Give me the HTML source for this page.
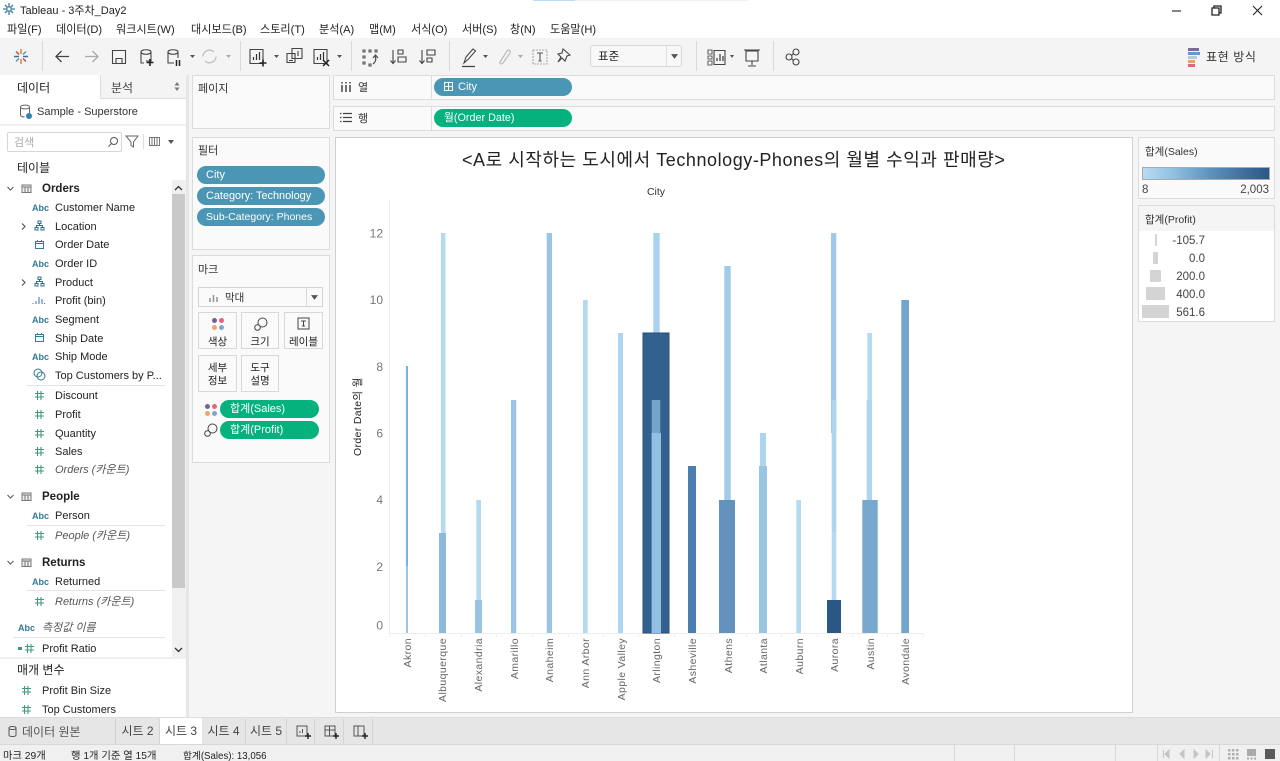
<!DOCTYPE html>
<html lang="ko"><head><meta charset="utf-8"><title>Tableau - 3주차_Day2</title>
<style>
html,body{margin:0;padding:0;width:1280px;height:761px;overflow:hidden;background:#f5f5f5}
body{position:relative;font-family:"Liberation Sans","Noto Sans CJK KR",sans-serif;color:#222;font-size:12px}
.a{position:absolute}
.t{position:absolute;white-space:nowrap;line-height:14px;height:14px;margin-top:1px}
.c{position:absolute;background:#fafafa;border:1px solid #dcdcdc;box-sizing:border-box}
.p{position:absolute;border-radius:10px;color:#fff;line-height:19px;height:18px;white-space:nowrap;box-sizing:border-box}
.b{background:#4b96b4}.g{background:#05b27e}
.i{position:absolute;overflow:visible}
.l{position:absolute;height:1px;background:#e4e4e4}
.m{position:absolute;width:39px;height:37px;background:#fafafa;border:1px solid #d8d8d8;box-sizing:border-box;text-align:center;font-size:10.5px;line-height:13px;color:#222}
.s{position:absolute;width:1px;height:30px;top:41px;background:#d8d8d8}
.tab{position:absolute;top:719px;height:25px;border-right:1px solid #d4d4d4;box-sizing:border-box;text-align:center;line-height:25px;font-size:12px;color:#444}
.st{position:absolute;top:744px;height:17px;width:1px;background:#d8d8d8}
</style></head>
<body>
<svg width="0" height="0" style="position:absolute">
<symbol id="hash" viewBox="0 0 11 11"><path d="M3.500 1v9M7 1v9M1 3.500h9M1 7h9" stroke="#3f9a7a" stroke-width="1.100" fill="none"/></symbol>
<symbol id="date" viewBox="0 0 11 11"><path d="M1.500 2.500h8v7h-8zM1.500 4.500h8M3.500 1v2M7.500 1v2" stroke="#2f7f9c" stroke-width="1" fill="none"/></symbol>
<symbol id="hier" viewBox="0 0 11 11"><path d="M4 1h3v2.500H4zM1 7.500h3V10H1zM7 7.500h3V10H7zM5.500 3.500V5.500M2.500 7.500V5.500h6v2" stroke="#2f6f8f" stroke-width="1" fill="none"/></symbol>
<symbol id="tbl" viewBox="0 0 11 11"><path d="M1 2h9v7.500H1zM1 4h9M4 4v5.500M7 4v5.500" stroke="#777" stroke-width="1" fill="#eee"/></symbol>
<symbol id="chev" viewBox="0 0 9 9"><path d="M1.500 3l3 3 3-3" stroke="#555" stroke-width="1" fill="none"/></symbol>
<symbol id="chr" viewBox="0 0 9 9"><path d="M3 1.500l3 3-3 3" stroke="#444" stroke-width="1" fill="none"/></symbol>
<symbol id="dots" viewBox="0 0 14 14"><circle cx="3.500" cy="3.500" r="2.500" fill="#76618f"/><circle cx="10.500" cy="3.500" r="2.500" fill="#e8637a"/><circle cx="3.500" cy="10.500" r="2.500" fill="#f0a46c"/><circle cx="10.500" cy="10.500" r="2.500" fill="#7fa6cf"/></symbol>
<symbol id="size" viewBox="0 0 14 14"><circle cx="8.500" cy="5.500" r="4.500" stroke="#444" fill="none"/><circle cx="3.500" cy="10.500" r="2.800" stroke="#444" fill="#fafafa"/></symbol>
<symbol id="dd" viewBox="0 0 6 4"><path d="M0 0h6L3 4z" fill="#555"/></symbol>
</svg>

<!-- title bar -->
<div class="a" style="left:0;top:0;width:1280px;height:38px;background:#fff"></div>
<div class="a" style="left:533px;top:0;width:42px;height:1px;background:#bcdcf3"></div>
<div class="a" style="left:575px;top:0;width:173px;height:1px;background:#f2f2f2"></div>
<svg class="i" style="left:2px;top:2px" width="14" height="14" viewBox="0 0 14 14"><path d="M7 1v12M1 7h12M3 3l8 8M11 3l-8 8" stroke="#3a7fa8" stroke-width="1.300"/><path d="M5 5h4v4H5z" fill="#fff" stroke="#3a6f98"/></svg>
<div class="t" style="left:20px;top:3px;font-size:11px">Tableau - 3주차_Day2</div>
<div class="t" style="left:7px;top:22px;font-size:11.100px">파일(F)</div>
<div class="t" style="left:56px;top:22px;font-size:11.100px">데이터(D)</div>
<div class="t" style="left:116px;top:22px;font-size:11.100px">워크시트(W)</div>
<div class="t" style="left:191px;top:22px;font-size:11.100px">대시보드(B)</div>
<div class="t" style="left:260px;top:22px;font-size:11.100px">스토리(T)</div>
<div class="t" style="left:319px;top:22px;font-size:11.100px">분석(A)</div>
<div class="t" style="left:369px;top:22px;font-size:11.100px">맵(M)</div>
<div class="t" style="left:411px;top:22px;font-size:11.100px">서식(O)</div>
<div class="t" style="left:462px;top:22px;font-size:11.100px">서버(S)</div>
<div class="t" style="left:510px;top:22px;font-size:11.100px">창(N)</div>
<div class="t" style="left:550px;top:22px;font-size:11.100px">도움말(H)</div>
<svg class="i" style="left:1170px;top:4px" width="100" height="14" viewBox="0 0 100 14"><path d="M2 7h9" stroke="#333" stroke-width="1.200"/><path d="M42 4h7v7h-7zM44 4V2h7v7h-2" stroke="#222" stroke-width="1.300" fill="none"/><path d="M83 2l9 9M92 2l-9 9" stroke="#222" stroke-width="1.100"/></svg>

<!-- toolbar -->
<div class="a" style="left:0;top:38px;width:1280px;height:37px;background:#f4f4f4"></div>
<div class="s" style="left:42px"></div><div class="s" style="left:240px"></div><div class="s" style="left:351px"></div><div class="s" style="left:449px"></div><div class="s" style="left:696px"></div><div class="s" style="left:773px"></div>
<svg class="i" style="left:0;top:38px" width="830" height="37" viewBox="0 0 830 37" fill="none" stroke="#444" stroke-width="1.100">
<g stroke-width="1.400"><path d="M21 11v5M21 21v5" stroke="#e8763a"/><path d="M14 18.500h5M23 18.500h5" stroke="#3a6f98"/><path d="M16 13.500l3 3M23 20.500l3 3" stroke="#c8403f"/><path d="M26 13.500l-3 3M19 20.500l-3 3" stroke="#5a8fb8"/></g>
<path d="M56 18.500h13M61.500 13l-5.500 5.500 5.500 5.500" stroke-width="1.300" stroke="#444"/>
<path d="M85 18.500h13M92.500 13l5.500 5.500-5.500 5.500" stroke="#aaa" stroke-width="1.300"/>
<path d="M112.500 12.500h13v13h-13zM116 25.500v-5h6v5"/>
<path d="M141 14c0-3 10-3 10 0v9h-5M141 14v11h3M141 14c0 3 10 3 10 0"/><path d="M150 21v7M146.500 24.500h7" stroke="#222" stroke-width="1.600"/>
<path d="M168 14c0-3 10-3 10 0v6M168 14v11h6M168 14c0 3 10 3 10 0"/><path d="M176.500 22v6M179.500 22v6" stroke="#222" stroke-width="1.500"/>
<path d="M190 17h5l-2.500 3z" fill="#555" stroke="none"/>
<path d="M203 18.500a6.500 6.500 0 0 1 11-4.500M216 18.500a6.500 6.500 0 0 1-11 4.500" stroke="#bbb" stroke-width="1.200"/>
<path d="M226 17h5l-2.500 3z" fill="#aaa" stroke="none"/>
<path d="M250 11.500h13v14h-13z"/><path d="M253.500 22v-3M256.500 22v-6M259.500 22v-8" stroke="#333" stroke-width="1.200"/><path d="M263 21.500v7M259.500 25h7" stroke="#222" stroke-width="1.600"/>
<path d="M274 17h5l-2.500 3z" fill="#555" stroke="none"/>
<path d="M292 10.500h10v10h-10zM287 15.500h8v9h-8z" fill="#f4f4f4"/><path d="M295 18v-3M298 18v-5" stroke="#444"/><path d="M289 22.500h4"/>
<path d="M314 11.500h13v14h-13z"/><path d="M317.500 22v-3M320.500 22v-6M323.500 22v-8" stroke="#333" stroke-width="1.200"/><path d="M323 22l6 6M329 22l-6 6" stroke="#222" stroke-width="1.500"/>
<path d="M337 17h5l-2.500 3z" fill="#555" stroke="none"/>
<path d="M363 12h2v2h-2zM363 18h2v2h-2zM369 12h2v2h-2zM375 12h2v2h-2zM369 26h2v2h-2zM363 24h2v2h-2z" stroke="#555"/><path d="M375 18a6 6 0 0 1-2 8M378 20l-2.500-3-2.500 3"/>
<path d="M393 12v13M390.500 22.500l2.500 3 2.500-3" /><path d="M398 12h5v4h-5zM398 19h8v5h-8z"/>
<path d="M422 12v13M419.500 22.500l2.500 3 2.500-3"/><path d="M427 12h8v5h-8zM427 20h5v4h-5z"/>
<path d="M464 25l2-6 7-8 2.500 2-7 8z"/><path d="M462 28.500h13" stroke-width="1.300"/>
<path d="M483 17h5l-2.500 3z" fill="#555" stroke="none"/>
<path d="M500 24l7-11c2-2 4 0 3 2l-7 10c-2 2-4 0-3-1z" stroke="#bbb" stroke-width="1.200"/>
<path d="M518 17h5l-2.500 3z" fill="#aaa" stroke="none"/>
<path d="M533 12h14v14h-14z" stroke="#aaa" stroke-dasharray="2 1"/><path d="M537 15h6M540 15v8M538.500 23h3" stroke="#555"/>
<path d="M563 11l7 6-3 1-2 5-3-3-4 4 3-5-3-3 4-1z" stroke="#444"/>
<path d="M708 12h4v4h-4zM708 18h4v3h-4zM708 23h4v4h-4z" stroke="#666"/><path d="M714 12.500h11v14h-11z"/><path d="M717 23v-3M720 23v-7M723 23v-5" stroke="#444" stroke-width="1.300"/>
<path d="M730 17h4l-2 3z" fill="#555" stroke="none"/>
<path d="M744 12h16M746 13h12v10h-12zM752 23v4M748 28h8" stroke-width="1.100"/>
<circle cx="796" cy="14" r="3"/><circle cx="789" cy="19" r="3"/><circle cx="796" cy="24" r="3"/><path d="M793.500 15.500l-2 2M791.500 20.500l2 2"/>
</svg>
<div class="a" style="left:590px;top:45px;width:92px;height:22px;background:#f8f8f8;border:1px solid #d8d8d8;border-radius:3px;box-sizing:border-box"></div>
<div class="a" style="left:666px;top:46px;width:1px;height:20px;background:#ddd"></div>
<svg class="i" style="left:671px;top:54px" width="7" height="5"><use href="#dd"/></svg>
<div class="t" style="left:598px;top:49px;font-size:11.500px">표준</div>
<div class="a" style="left:1188px;top:48px;width:11px;height:3px;background:#7c6a96"></div>
<div class="a" style="left:1188px;top:52px;width:12px;height:3px;background:#5b9bd0"></div>
<div class="a" style="left:1188px;top:56px;width:9px;height:3px;background:#b6c9dc"></div>
<div class="a" style="left:1188px;top:60px;width:7px;height:3px;background:#f0a060"></div>
<div class="a" style="left:1188px;top:64px;width:7px;height:3px;background:#e8637a"></div>
<div class="t" style="left:1206px;top:49px;font-size:12px;letter-spacing:.6px;color:#333">표현 방식</div>

<!-- data pane -->
<div class="a" style="left:0;top:75px;width:186px;height:643px;background:#fff"></div>
<div class="a" style="left:186px;top:75px;width:3px;height:643px;background:#e6e6e6"></div>
<div class="a" style="left:100px;top:75px;width:86px;height:24px;background:#f4f4f4;border-left:1px solid #ddd;border-bottom:1px solid #ddd;box-sizing:border-box"></div>
<div class="t" style="left:17px;top:80px;font-size:12px">데이터</div>
<div class="t" style="left:111px;top:80px;font-size:12px;color:#444">분석</div>
<svg class="i" style="left:174px;top:82px" width="6" height="9"><path d="M3 0l2.500 3.500h-5zM3 9L.5 5.500h5z" fill="#777"/></svg>
<svg class="i" style="left:19px;top:104px" width="14" height="15" viewBox="0 0 14 15" fill="none" stroke="#666"><path d="M1.500 3c0-2.500 9-2.500 9 0v6M1.500 3v8c0 1 2 2 4 2M1.500 3c0 2.500 9 2.500 9 0"/><circle cx="10" cy="12" r="3" fill="#2d7fb5" stroke="none"/></svg>
<div class="t" style="left:37px;top:104px;font-size:11px;color:#333">Sample - Superstore</div>
<div class="a" style="left:0;top:124px;width:186px;height:2px;background:#efefef"></div>
<div class="a" style="left:7px;top:132px;width:115px;height:20px;background:#fff;border:1px solid #d6d6d6;border-radius:2px;box-sizing:border-box"></div>
<div class="t" style="left:14px;top:135px;font-size:11px;color:#aaa">검색</div>
<svg class="i" style="left:107px;top:136px" width="12" height="12" fill="none" stroke="#555"><circle cx="7" cy="5" r="3.500"/><path d="M4.500 7.500L1.500 10.500"/></svg>
<svg class="i" style="left:125px;top:134px" width="15" height="15" fill="none" stroke="#666"><path d="M1 2h12L8.500 8v5L6 11.500V8z"/></svg>
<div class="a" style="left:143px;top:134px;width:1px;height:15px;background:#ddd"></div>
<svg class="i" style="left:149px;top:137px" width="12" height="10"><path d="M.5 0v9M3 0v9M5.500 0v9M8 0v9M10.500 0v9M0 .5h11M0 8.500h11" stroke="#777" stroke-width="1"/></svg>
<svg class="i" style="left:168px;top:140px" width="6" height="4"><use href="#dd"/></svg>
<div class="t" style="left:17px;top:160px;font-size:12px">테이블</div>

<div class="a" style="left:172px;top:180px;width:14px;height:477px;background:#f0f0f0"></div>
<div class="a" style="left:172px;top:194px;width:13px;height:394px;background:#c9c9c9"></div>
<svg class="i" style="left:174px;top:184px" width="9" height="9"><path d="M1 6l3.500-3.500L8 6" stroke="#333" stroke-width="1.300" fill="none"/></svg>
<svg class="i" style="left:174px;top:645px" width="9" height="9"><path d="M1 3l3.500 3.500L8 3" stroke="#333" stroke-width="1.300" fill="none"/></svg>

<!-- table heads -->
<svg class="i" style="left:6px;top:184px" width="9" height="9"><use href="#chev"/></svg><svg class="i" style="left:21px;top:183px" width="11" height="11"><use href="#tbl"/></svg><div class="t" style="left:42px;top:181px;font-weight:bold;font-size:11.500px;color:#222">Orders</div>
<svg class="i" style="left:6px;top:492px" width="9" height="9"><use href="#chev"/></svg><svg class="i" style="left:21px;top:491px" width="11" height="11"><use href="#tbl"/></svg><div class="t" style="left:42px;top:489px;font-weight:bold;font-size:11.500px;color:#222">People</div>
<svg class="i" style="left:6px;top:558px" width="9" height="9"><use href="#chev"/></svg><svg class="i" style="left:21px;top:557px" width="11" height="11"><use href="#tbl"/></svg><div class="t" style="left:42px;top:555px;font-weight:bold;font-size:11.500px;color:#222">Returns</div>

<!-- fields -->
<style>.f{position:absolute;left:55px;white-space:nowrap;line-height:14px;height:14px;font-size:11px;color:#222;margin-top:1px}.ab{position:absolute;left:32px;font-size:9px;font-weight:bold;color:#2f7a9a;line-height:14px;margin-top:1px}.it{font-style:italic;color:#555}</style>
<div class="ab" style="top:200px">Abc</div><div class="f" style="top:200px">Customer Name</div>
<svg class="i" style="left:19px;top:222px" width="9" height="9"><use href="#chr"/></svg><svg class="i" style="left:34px;top:220px" width="11" height="11"><use href="#hier"/></svg><div class="f" style="top:219px">Location</div>
<svg class="i" style="left:34px;top:239px" width="11" height="11"><use href="#date"/></svg><div class="f" style="top:237px">Order Date</div>
<div class="ab" style="top:256px">Abc</div><div class="f" style="top:256px">Order ID</div>
<svg class="i" style="left:19px;top:278px" width="9" height="9"><use href="#chr"/></svg><svg class="i" style="left:34px;top:276px" width="11" height="11"><use href="#hier"/></svg><div class="f" style="top:275px">Product</div>
<svg class="i" style="left:32px;top:295px" width="13" height="10"><path d="M1 8v1M4 6v3M7 2v7M10 4v5M12.500 8v1" stroke="#2f7a9a" stroke-width="1"/></svg><div class="f" style="top:293px">Profit (bin)</div>
<div class="ab" style="top:312px">Abc</div><div class="f" style="top:312px">Segment</div>
<svg class="i" style="left:34px;top:332px" width="11" height="11"><use href="#date"/></svg><div class="f" style="top:331px">Ship Date</div>
<div class="ab" style="top:349px">Abc</div><div class="f" style="top:349px">Ship Mode</div>
<svg class="i" style="left:33px;top:368px" width="13" height="13" fill="none" stroke="#2f7a9a"><circle cx="5" cy="5" r="4"/><circle cx="8" cy="8" r="4"/></svg><div class="f" style="top:368px">Top Customers by P...</div>
<div class="l" style="left:27px;top:385px;width:138px"></div>
<svg class="i" style="left:34px;top:390px" width="11" height="11"><use href="#hash"/></svg><div class="f" style="top:388px">Discount</div>
<svg class="i" style="left:34px;top:409px" width="11" height="11"><use href="#hash"/></svg><div class="f" style="top:407px">Profit</div>
<svg class="i" style="left:34px;top:428px" width="11" height="11"><use href="#hash"/></svg><div class="f" style="top:426px">Quantity</div>
<svg class="i" style="left:34px;top:446px" width="11" height="11"><use href="#hash"/></svg><div class="f" style="top:444px">Sales</div>
<svg class="i" style="left:34px;top:464px" width="11" height="11"><use href="#hash"/></svg><div class="f it" style="top:462px">Orders (카운트)</div>
<div class="ab" style="top:508px">Abc</div><div class="f" style="top:508px">Person</div>
<div class="l" style="left:27px;top:525px;width:138px"></div>
<svg class="i" style="left:34px;top:530px" width="11" height="11"><use href="#hash"/></svg><div class="f it" style="top:528px">People (카운트)</div>
<div class="ab" style="top:574px">Abc</div><div class="f" style="top:574px">Returned</div>
<div class="l" style="left:27px;top:590px;width:138px"></div>
<svg class="i" style="left:34px;top:596px" width="11" height="11"><use href="#hash"/></svg><div class="f it" style="top:594px">Returns (카운트)</div>
<div class="ab" style="top:620px;left:18px">Abc</div><div class="f it" style="top:620px;left:42px">측정값 이름</div>
<div class="l" style="left:13px;top:637px;width:152px"></div>
<svg class="i" style="left:24px;top:643px" width="11" height="11"><use href="#hash"/></svg><div class="a" style="left:18px;top:647px;width:4px;height:3px;background:#3f9a7a"></div><div class="f" style="top:641px;left:42px">Profit Ratio</div>
<div class="a" style="left:0;top:657px;width:186px;height:2px;background:#efefef"></div>
<div class="t" style="left:17px;top:662px;font-size:12px">매개 변수</div>
<svg class="i" style="left:21px;top:685px" width="11" height="11"><use href="#hash"/></svg><div class="f" style="top:683px;left:42px">Profit Bin Size</div>
<svg class="i" style="left:21px;top:704px" width="11" height="11"><use href="#hash"/></svg><div class="f" style="top:702px;left:42px">Top Customers</div>

<!-- pages / filters / marks -->
<div class="c" style="left:192px;top:75px;width:138px;height:54px"></div>
<div class="t" style="left:198px;top:81px;font-size:11px;color:#333">페이지</div>
<div class="c" style="left:192px;top:137px;width:138px;height:113px"></div>
<div class="t" style="left:198px;top:143px;font-size:11px;color:#333">필터</div>
<div class="p b" style="left:197px;top:166px;width:128px;padding-left:9px;font-size:11px">City</div>
<div class="p b" style="left:197px;top:187px;width:128px;padding-left:9px;font-size:10.900px">Category: Technology</div>
<div class="p b" style="left:197px;top:208px;width:128px;padding-left:9px;font-size:10.500px">Sub-Category: Phones</div>
<div class="c" style="left:192px;top:255px;width:138px;height:208px"></div>
<div class="t" style="left:198px;top:262px;font-size:11px;color:#333">마크</div>
<div class="a" style="left:198px;top:287px;width:125px;height:20px;background:#fafafa;border:1px solid #d4d4d4;box-sizing:border-box"></div>
<div class="a" style="left:306px;top:288px;width:1px;height:18px;background:#d8d8d8"></div>
<svg class="i" style="left:311px;top:295px" width="7" height="5"><use href="#dd"/></svg>
<svg class="i" style="left:209px;top:293px" width="10" height="9"><path d="M1 9V5M4.500 9V2M8 9V4" stroke="#999" stroke-width="1.600"/></svg>
<div class="t" style="left:225px;top:290px;font-size:10.500px;color:#333">막대</div>
<div class="m" style="left:198px;top:312px"><svg style="position:absolute;left:12px;top:4px" width="14" height="14"><use href="#dots"/></svg><span style="position:absolute;left:0;right:0;top:23px">색상</span></div>
<div class="m" style="left:241px;top:312px;width:38px"><svg style="position:absolute;left:12px;top:4px" width="14" height="14"><use href="#size"/></svg><span style="position:absolute;left:0;right:0;top:23px">크기</span></div>
<div class="m" style="left:284px;top:312px;width:39px"><svg style="position:absolute;left:12px;top:4px" width="13" height="13" fill="none" stroke="#444"><path d="M1 1h11v11H1zM4 4h5M6.500 4v5M5 9h3"/></svg><span style="position:absolute;left:0;right:0;top:23px">레이블</span></div>
<div class="m" style="left:198px;top:355px;padding-top:6px">세부<br>정보</div>
<div class="m" style="left:241px;top:355px;width:38px;padding-top:6px">도구<br>설명</div>
<svg class="i" style="left:204px;top:403px" width="14" height="14"><use href="#dots"/></svg>
<svg class="i" style="left:204px;top:423px" width="14" height="14"><use href="#size"/></svg>
<div class="p g" style="left:220px;top:400px;width:99px;padding-left:10px;font-size:11px">합계(Sales)</div>
<div class="p g" style="left:220px;top:421px;width:99px;padding-left:10px;font-size:11px">합계(Profit)</div>

<!-- shelves -->
<div class="c" style="left:333px;top:75px;width:942px;height:25px"></div>
<div class="c" style="left:333px;top:106px;width:942px;height:25px"></div>
<div class="a" style="left:431px;top:76px;width:1px;height:23px;background:#dcdcdc"></div>
<div class="a" style="left:431px;top:107px;width:1px;height:23px;background:#dcdcdc"></div>
<svg class="i" style="left:341px;top:81px" width="10" height="11"><path d="M1 4v7M5 4v7M9 4v7" stroke="#444" stroke-width="1.500"/><path d="M1 1v1.500M5 1v1.500M9 1v1.500" stroke="#444" stroke-width="1.500"/></svg>
<div class="t" style="left:358px;top:80px;font-size:11px;color:#333">열</div>
<svg class="i" style="left:340px;top:112px" width="12" height="11"><path d="M0 1.500h1.500M3 1.500h9M0 5.500h1.500M3 5.500h9M0 9.500h1.500M3 9.500h9" stroke="#444" stroke-width="1.300"/></svg>
<div class="t" style="left:358px;top:111px;font-size:11px;color:#333">행</div>
<div class="p b" style="left:434px;top:78px;width:138px;padding-left:24px;font-size:11px">City</div>
<svg class="i" style="left:444px;top:82px" width="10" height="10" fill="none" stroke="#fff"><path d="M.5.500h8v8h-8zM.5 4.500h8M4.500.5v8"/></svg>
<div class="p g" style="left:434px;top:109px;width:138px;padding-left:10px;font-size:10.800px">월(Order Date)</div>

<!-- chart -->
<div class="a" style="left:335px;top:137px;width:798px;height:576px;background:#fff;border:1px solid #cfcfcf;box-sizing:border-box"></div>
<div class="t" style="left:462px;top:148px;height:22px;line-height:22px;font-size:18px;letter-spacing:.55px;color:#222">&lt;A로 시작하는 도시에서 Technology-Phones의 월별 수익과 판매량&gt;</div>
<svg class="i" style="left:0;top:0" width="1280" height="761" viewBox="0 0 1280 761" font-family="Liberation Sans, Noto Sans CJK KR, sans-serif">
<path d="M389.500 200V633M389 633.500H923" stroke="#eee" fill="none"/>
<path d="M389.500 633v4M425.500 633v4M461.500 633v4M496.500 633v4M532.500 633v4M568.500 633v4M603.500 633v4M638.500 633v4M674.500 633v4M710.500 633v4M746.500 633v4M781.500 633v4M817.500 633v4M852.500 633v4M887.500 633v4M923.500 633v4" stroke="#eee"/>
<text x="656" y="195" font-size="10.500" text-anchor="middle" fill="#333">City</text>
<g font-size="12" fill="#777" text-anchor="end"><text x="383" y="237.500">12</text><text x="383" y="304">10</text><text x="383" y="371">8</text><text x="383" y="437.500">6</text><text x="383" y="504">4</text><text x="383" y="571">2</text><text x="383" y="629.500">0</text></g>
<text transform="translate(361,456) rotate(-90)" font-size="10.500" letter-spacing=".35" fill="#222">Order Date의 월</text>
<!-- bars -->
<rect x="406" y="366" width="2" height="267" fill="#7fb0d6"/><rect x="406" y="566" width="2" height="67" fill="#9dc7e5"/>
<rect x="441" y="233" width="4.500" height="400" fill="#b5d9f1"/><rect x="439" y="533" width="7" height="100" fill="#8ab9dc"/>
<rect x="476.300" y="500" width="4.700" height="133" fill="#b5d9f1"/><rect x="475" y="600" width="7" height="33" fill="#97c4e3"/>
<rect x="511" y="400" width="5.300" height="233" fill="#9ac6e4"/>
<rect x="546.700" y="233" width="5.300" height="400" fill="#9ac6e4"/>
<rect x="583" y="300" width="4.700" height="333" fill="#b5d9f1"/>
<rect x="618" y="333" width="5" height="300" fill="#afd5ef"/>
<rect x="653.300" y="233" width="6.400" height="100" fill="#a9d2ec"/>
<rect x="643" y="333" width="26" height="300" fill="#33618f" stroke="#234f7d"/>
<rect x="651.700" y="400" width="8.600" height="233" fill="#74a3cc"/><rect x="651.700" y="433" width="9.300" height="200" fill="#93c0e2"/>
<rect x="688" y="466" width="8" height="167" fill="#4c7fb0"/>
<rect x="724.300" y="266" width="6.400" height="234" fill="#a2cbe8"/><rect x="719" y="500" width="16" height="133" fill="#6393bd"/>
<rect x="760" y="433" width="6" height="34" fill="#aed5ef"/><rect x="759" y="466" width="8" height="167" fill="#99c5e4"/>
<rect x="796.300" y="500" width="4.700" height="133" fill="#b5daf2"/>
<rect x="831" y="233" width="5.300" height="200" fill="#9fc9e6"/><rect x="831.700" y="400" width="4.600" height="132" fill="#aed4ee"/><rect x="831.700" y="532" width="4.600" height="68" fill="#b7daf2"/>
<rect x="827" y="600" width="14" height="33" fill="#2b5785"/>
<rect x="867.300" y="333" width="4.700" height="67" fill="#b5daf2"/><rect x="866.700" y="400" width="5.300" height="100" fill="#aed5ee"/><rect x="862.300" y="500" width="15.400" height="133" fill="#78a8cf"/>
<rect x="901.300" y="300" width="7.700" height="333" fill="#72a5cd"/>
<!-- x labels -->
<g font-size="10.500" letter-spacing=".4" fill="#666" text-anchor="end">
<text transform="translate(411,638) rotate(-90)">Akron</text>
<text transform="translate(446,638) rotate(-90)">Albuquerque</text>
<text transform="translate(482,638) rotate(-90)">Alexandria</text>
<text transform="translate(518,638) rotate(-90)">Amarillo</text>
<text transform="translate(553,638) rotate(-90)">Anaheim</text>
<text transform="translate(589,638) rotate(-90)">Ann Arbor</text>
<text transform="translate(625,638) rotate(-90)">Apple Valley</text>
<text transform="translate(660,638) rotate(-90)">Arlington</text>
<text transform="translate(696,638) rotate(-90)">Asheville</text>
<text transform="translate(732,638) rotate(-90)">Athens</text>
<text transform="translate(767,638) rotate(-90)">Atlanta</text>
<text transform="translate(803,638) rotate(-90)">Auburn</text>
<text transform="translate(838,638) rotate(-90)">Aurora</text>
<text transform="translate(874,638) rotate(-90)">Austin</text>
<text transform="translate(909,638) rotate(-90)">Avondale</text>
</g>
</svg>

<!-- legends -->
<div class="c" style="left:1138px;top:137px;width:137px;height:62px"></div>
<div class="t" style="left:1145px;top:144px;font-size:10.500px;color:#333">합계(Sales)</div>
<div class="a" style="left:1142px;top:167px;width:128px;height:13px;box-sizing:border-box;border:1px solid #aaa;background:linear-gradient(90deg,#b8dcf3,#8fbfe0 25%,#5b8fbc 55%,#2b5785)"></div>
<div class="t" style="left:1142px;top:182px;font-size:11.500px;color:#444">8</div>
<div class="t" style="right:11px;top:182px;font-size:11.500px;color:#444">2,003</div>
<div class="c" style="left:1138px;top:205px;width:137px;height:117px"></div>
<div class="a" style="left:1139px;top:206px;width:135px;height:25px;background:#f5f5f5"></div>
<div class="a" style="left:1139px;top:231px;width:135px;height:90px;background:#fff"></div>
<div class="t" style="left:1145px;top:212px;font-size:10.500px;color:#333">합계(Profit)</div>
<div class="a" style="left:1155px;top:234px;width:2px;height:12px;background:#d4d4d4"></div>
<div class="a" style="left:1153px;top:252px;width:5px;height:12px;background:#d4d4d4"></div>
<div class="a" style="left:1150px;top:270px;width:11px;height:12px;background:#d4d4d4"></div>
<div class="a" style="left:1146px;top:287px;width:19px;height:13px;background:#d4d4d4"></div>
<div class="a" style="left:1142px;top:305px;width:27px;height:13px;background:#d4d4d4"></div>
<div class="t" style="right:75px;top:233px;font-size:11.500px;color:#444">-105.7</div>
<div class="t" style="right:75px;top:251px;font-size:11.500px;color:#444">0.0</div>
<div class="t" style="right:75px;top:269px;font-size:11.500px;color:#444">200.0</div>
<div class="t" style="right:75px;top:287px;font-size:11.500px;color:#444">400.0</div>
<div class="t" style="right:75px;top:305px;font-size:11.500px;color:#444">561.6</div>

<!-- tab bar -->
<div class="a" style="left:0;top:717px;width:1280px;height:1px;background:#dcdcdc"></div>
<div class="a" style="left:0;top:718px;width:1280px;height:26px;background:#e6e6e6"></div>
<div class="a" style="left:0;top:744px;width:1280px;height:17px;background:#f0f0f0;border-top:1px solid #d8d8d8;box-sizing:border-box"></div>
<svg class="i" style="left:8px;top:725px" width="10" height="13" fill="none" stroke="#555"><path d="M1 3c0-2 7-2 7 0v7c0 2-7 2-7 0zM1 3c0 2 7 2 7 0"/></svg>
<div class="t" style="left:22px;top:724px;font-size:12px;color:#555">데이터 원본</div>
<div class="a" style="left:115px;top:719px;width:1px;height:25px;background:#d0d0d0"></div>
<div class="tab" style="left:116px;width:44px">시트 2</div>
<div class="tab" style="left:160px;width:42px;background:#fff;top:718px;height:26px;border:none;line-height:27px">시트 3</div>
<div class="tab" style="left:202px;width:44px">시트 4</div>
<div class="tab" style="left:246px;width:41px">시트 5</div>
<div class="tab" style="left:287px;width:28px"></div>
<div class="tab" style="left:315px;width:29px"></div>
<div class="tab" style="left:344px;width:29px"></div>
<svg class="i" style="left:296px;top:725px" width="80" height="15" fill="none" stroke="#555">
<path d="M1 1h10v10H1z"/><path d="M4 8V6M6.500 8V4" /><path d="M12 8v6M9 11h6" stroke="#222" stroke-width="1.400"/>
<path d="M29 1h10v10H29zM29 5h10M33.500 1v10"/><path d="M40 8v6M37 11h6" stroke="#222" stroke-width="1.400"/>
<path d="M58 1h4v10h-4zM62 1h6v10h-6"/><path d="M69 8v6M66 11h6" stroke="#222" stroke-width="1.400"/></svg>

<!-- status -->
<div class="t" style="left:3px;top:750px;height:12px;line-height:12px;font-size:10.300px;color:#222">마크 29개</div>
<div class="t" style="left:71px;top:750px;height:12px;line-height:12px;font-size:10.300px;color:#222">행 1개 기준 열 15개</div>
<div class="t" style="left:183px;top:750px;height:12px;line-height:12px;font-size:9.700px;color:#222">합계(Sales): 13,056</div>
<div class="st" style="left:954px"></div><div class="st" style="left:1014px"></div><div class="st" style="left:1115px"></div><div class="st" style="left:1157px"></div><div class="st" style="left:1219px"></div>
<svg class="i" style="left:1160px;top:747px" width="115" height="14"><path d="M3.500 3v8M9 3L5 7l4 4zM24 3l-4 4 4 4zM34 3l4 4-4 4zM46 3l4 4-4 4zM52.500 3v8" fill="#c4c4c4" stroke="#c4c4c4"/>
<path d="M68 2h2.500v2.500H68zM72 2h2.500v2.500H72zM76 2h2.500v2.500H76zM68 6h2.500v2.500H68zM72 6h2.500v2.500H72zM76 6h2.500v2.500H76zM68 10h2.500v2.500H68zM72 10h2.500v2.500H72zM76 10h2.500v2.500H76z" fill="#b0b0b0"/>
<path d="M87 2h9v7h-9zM87 10.500h2v2h-2zM90.500 10.500h2v2h-2zM94 10.500h2v2h-2z" fill="#aaa"/>
<path d="M105 2h10v10h-10z" fill="#5a5a5a"/>
</svg>
</body></html>
